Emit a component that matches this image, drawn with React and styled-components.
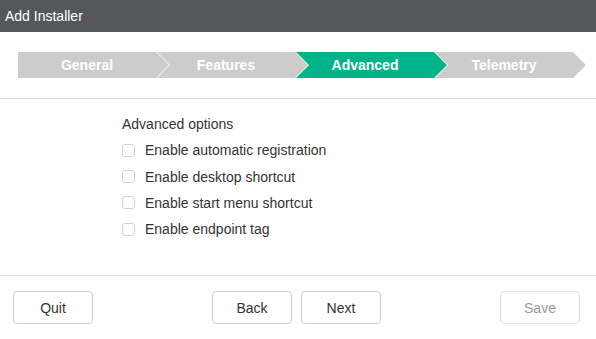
import React, { useState } from 'react';
import styled, { createGlobalStyle } from 'styled-components';

const GlobalStyle = createGlobalStyle`
  html, body {
    margin: 0;
    padding: 0;
    background: #fff;
  }
  body {
    font-family: "Liberation Sans", Arial, sans-serif;
    color: #333;
  }
`;

const Dialog = styled.div`
  display: flex;
  flex-direction: column;
  height: 100vh;
  width: 100%;
`;

const Header = styled.div`
  height: 32px;
  background: #55585b;
  color: #fff;
  font-size: 14px;
  display: flex;
  align-items: center;
  padding-left: 5px;
`;

const StepsBar = styled.div`
  display: flex;
  padding: 20px 0 20px 18px;
  border-bottom: 1px solid #dcdcdc;
`;

const Step = styled.div`
  width: 151px;
  height: 26px;
  flex-shrink: 0;
  margin-left: ${p => (p.$first ? '0' : '-12px')};
  background: ${p => (p.$active ? '#00b388' : '#cccccc')};
  color: #fff;
  font-size: 14px;
  font-weight: 700;
  display: flex;
  align-items: center;
  justify-content: center;
  padding-right: 13px;
  box-sizing: border-box;
  clip-path: ${p =>
    p.$first
      ? 'polygon(0 0, calc(100% - 13px) 0, 100% 50%, calc(100% - 13px) 100%, 0 100%)'
      : 'polygon(0 0, calc(100% - 13px) 0, 100% 50%, calc(100% - 13px) 100%, 0 100%, 13px 50%)'};
`;

const Content = styled.div`
  flex: 1;
  padding: 15px 0 0 122px;
`;

const SectionTitle = styled.div`
  font-size: 14px;
  line-height: 20px;
  margin-bottom: 3px;
`;

const OptionRow = styled.label`
  display: flex;
  align-items: center;
  height: 26.4px;
  font-size: 14px;
  cursor: pointer;
`;

const Box = styled.span`
  width: 11px;
  height: 11px;
  border: 1px solid #d2d2d2;
  border-radius: 3px;
  margin-right: 10px;
  background: ${p => (p.$checked ? '#00b388' : '#fff')};
  box-sizing: content-box;
`;

const Footer = styled.div`
  border-top: 1px solid #dcdcdc;
  padding: 15px 16px 15px 13px;
  display: grid;
  grid-template-columns: 1fr auto 1fr;
  align-items: center;
`;

const Group = styled.div`
  display: flex;
  gap: 9px;
  justify-content: ${p => p.$align || 'flex-start'};
`;

const Button = styled.button`
  width: 80px;
  height: 33px;
  border: 1px solid ${p => (p.disabled ? '#e0e0e0' : '#cfcfcf')};
  border-radius: 4px;
  background: #fff;
  color: ${p => (p.disabled ? '#999' : '#333')};
  font-family: "Liberation Sans", Arial, sans-serif;
  font-size: 14px;
  padding: 0;
  cursor: ${p => (p.disabled ? 'default' : 'pointer')};
`;

const steps = ['General', 'Features', 'Advanced', 'Telemetry'];
const options = [
  'Enable automatic registration',
  'Enable desktop shortcut',
  'Enable start menu shortcut',
  'Enable endpoint tag',
];

const App = () => {
  const [checked, setChecked] = useState({});

  return (
    <Dialog>
      <GlobalStyle />
      <Header>Add Installer</Header>
      <StepsBar>
        {steps.map((s, i) => (
          <Step key={s} $first={i === 0} $active={s === 'Advanced'}>
            {s}
          </Step>
        ))}
      </StepsBar>
      <Content>
        <SectionTitle>Advanced options</SectionTitle>
        {options.map(o => (
          <OptionRow key={o} onClick={() => setChecked({ ...checked, [o]: !checked[o] })}>
            <Box $checked={checked[o]} />
            {o}
          </OptionRow>
        ))}
      </Content>
      <Footer>
        <Group>
          <Button>Quit</Button>
        </Group>
        <Group>
          <Button>Back</Button>
          <Button>Next</Button>
        </Group>
        <Group $align="flex-end">
          <Button disabled>Save</Button>
        </Group>
      </Footer>
    </Dialog>
  );
};

export default App;
